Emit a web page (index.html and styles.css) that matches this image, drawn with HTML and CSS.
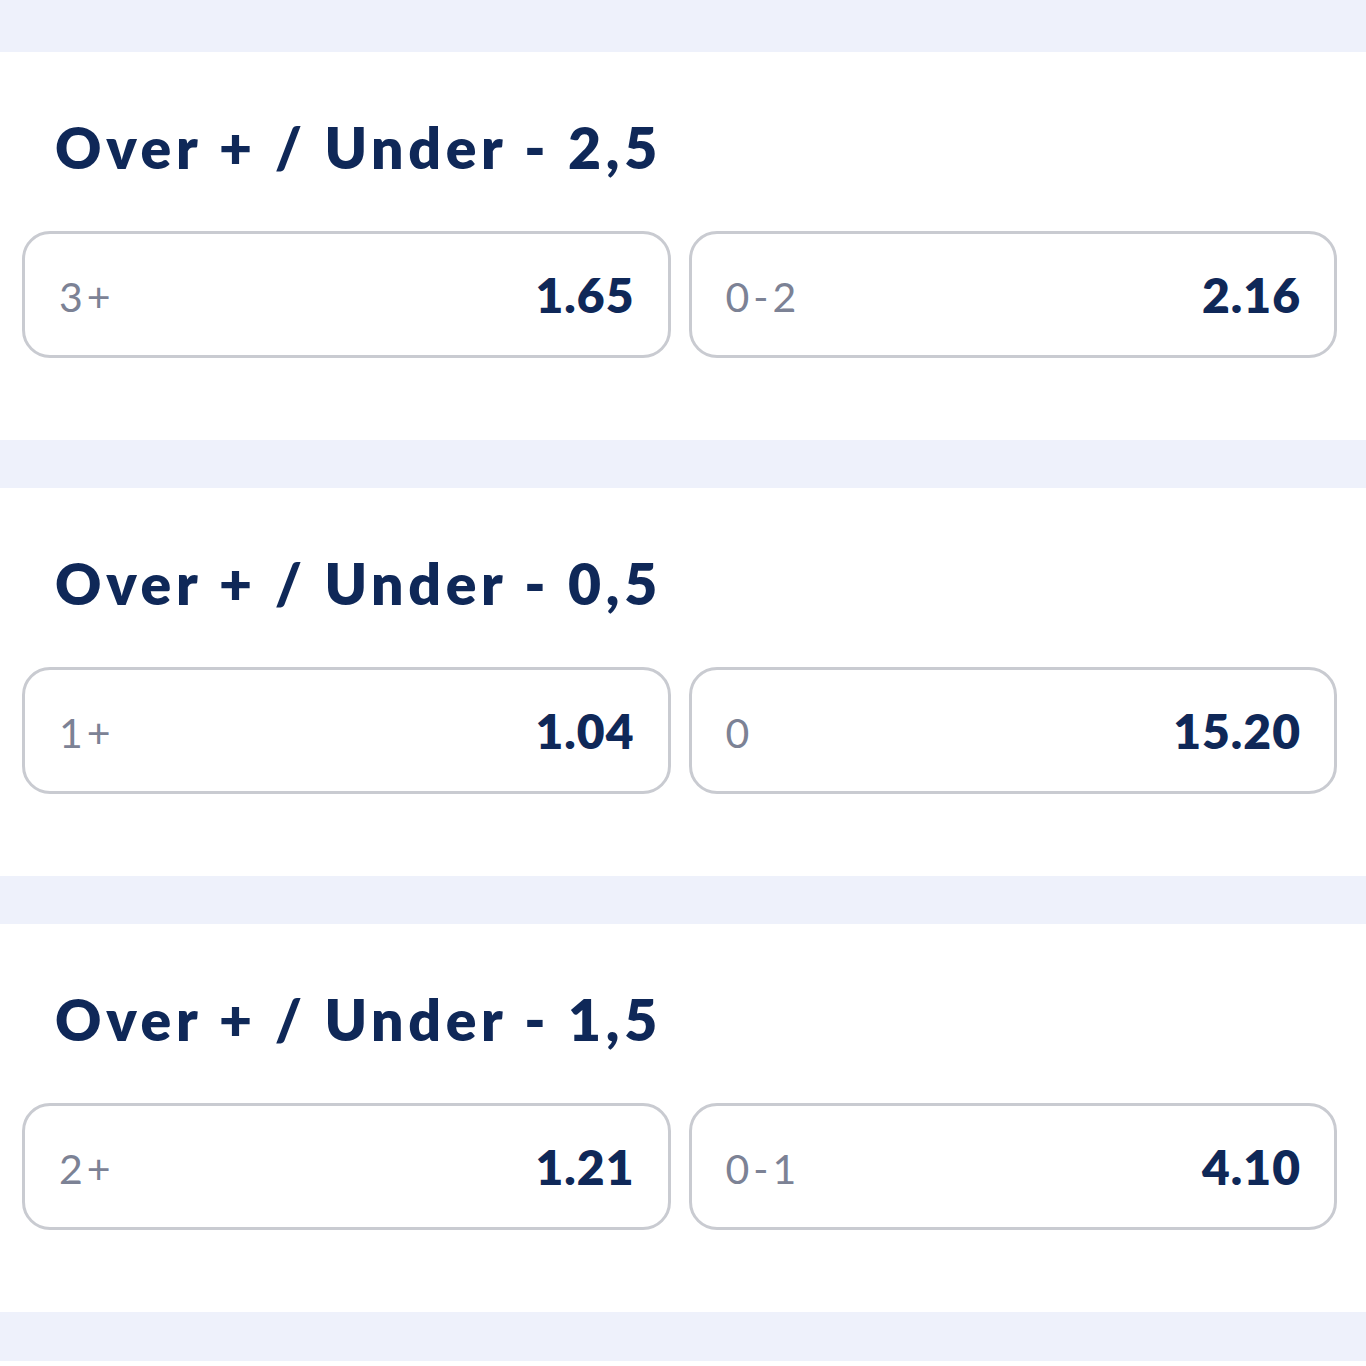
FILE: index.html
```html
<!DOCTYPE html>
<html lang="en">
<head>
<meta charset="utf-8">
<title>Goals markets</title>
<link rel="stylesheet" href="styles.css">
</head>
<body>
  <div class="gap gap-top"></div>
  <section class="market">
    <h2 class="market-title">Over + / Under - 2,5</h2>
    <div class="odds">
      <button class="odd"><span class="odd-label">3+</span><span class="odd-value">1.65</span></button>
      <button class="odd"><span class="odd-label">0-2</span><span class="odd-value">2.16</span></button>
    </div>
  </section>
  <div class="gap"></div>
  <section class="market">
    <h2 class="market-title">Over + / Under - 0,5</h2>
    <div class="odds">
      <button class="odd"><span class="odd-label">1+</span><span class="odd-value">1.04</span></button>
      <button class="odd"><span class="odd-label">0</span><span class="odd-value">15.20</span></button>
    </div>
  </section>
  <div class="gap"></div>
  <section class="market">
    <h2 class="market-title">Over + / Under - 1,5</h2>
    <div class="odds">
      <button class="odd"><span class="odd-label">2+</span><span class="odd-value">1.21</span></button>
      <button class="odd"><span class="odd-label">0-1</span><span class="odd-value">4.10</span></button>
    </div>
  </section>
  <div class="gap gap-bottom"></div>
</body>
</html>
```

FILE: styles.css
```css
html, body {
  margin: 0;
  padding: 0;
  background: #ffffff;
}

body {
  font-family: "Lato", "Noto Sans", sans-serif;
  color: #0f2858;
}

/* light separators between market blocks */
.gap {
  height: 48px;
  background: #eef1fb;
}

.gap-top {
  height: 52px;
}

.gap-bottom {
  height: 49px;
}

.market {
  height: 388px;
  box-sizing: border-box;
  padding: 0 29px 0 22px;
  display: flex;
  flex-direction: column;
}

.market-title {
  margin: 55px 0 0 33px;
  font-size: 57px;
  line-height: 80px;
  font-weight: 800;
  letter-spacing: 4.7px;
  color: #0f2858;
}

.odds {
  margin-top: 44px;
  display: grid;
  grid-template-columns: 1fr 1fr;
  gap: 18px;
}

.odd {
  height: 127px;
  box-sizing: border-box;
  border: 3px solid #c9cbd1;
  border-radius: 28px;
  background: #ffffff;
  padding: 0 33px 0 34px;
  display: flex;
  align-items: center;
  justify-content: space-between;
  font-family: inherit;
  cursor: pointer;
}

.odd-label {
  font-size: 41px;
  font-weight: 400;
  letter-spacing: 4px;
  color: #7c8295;
  padding-top: 3px;
}

.odd-value {
  font-size: 48px;
  font-weight: 800;
  letter-spacing: 1px;
  color: #0f2858;
}
```
